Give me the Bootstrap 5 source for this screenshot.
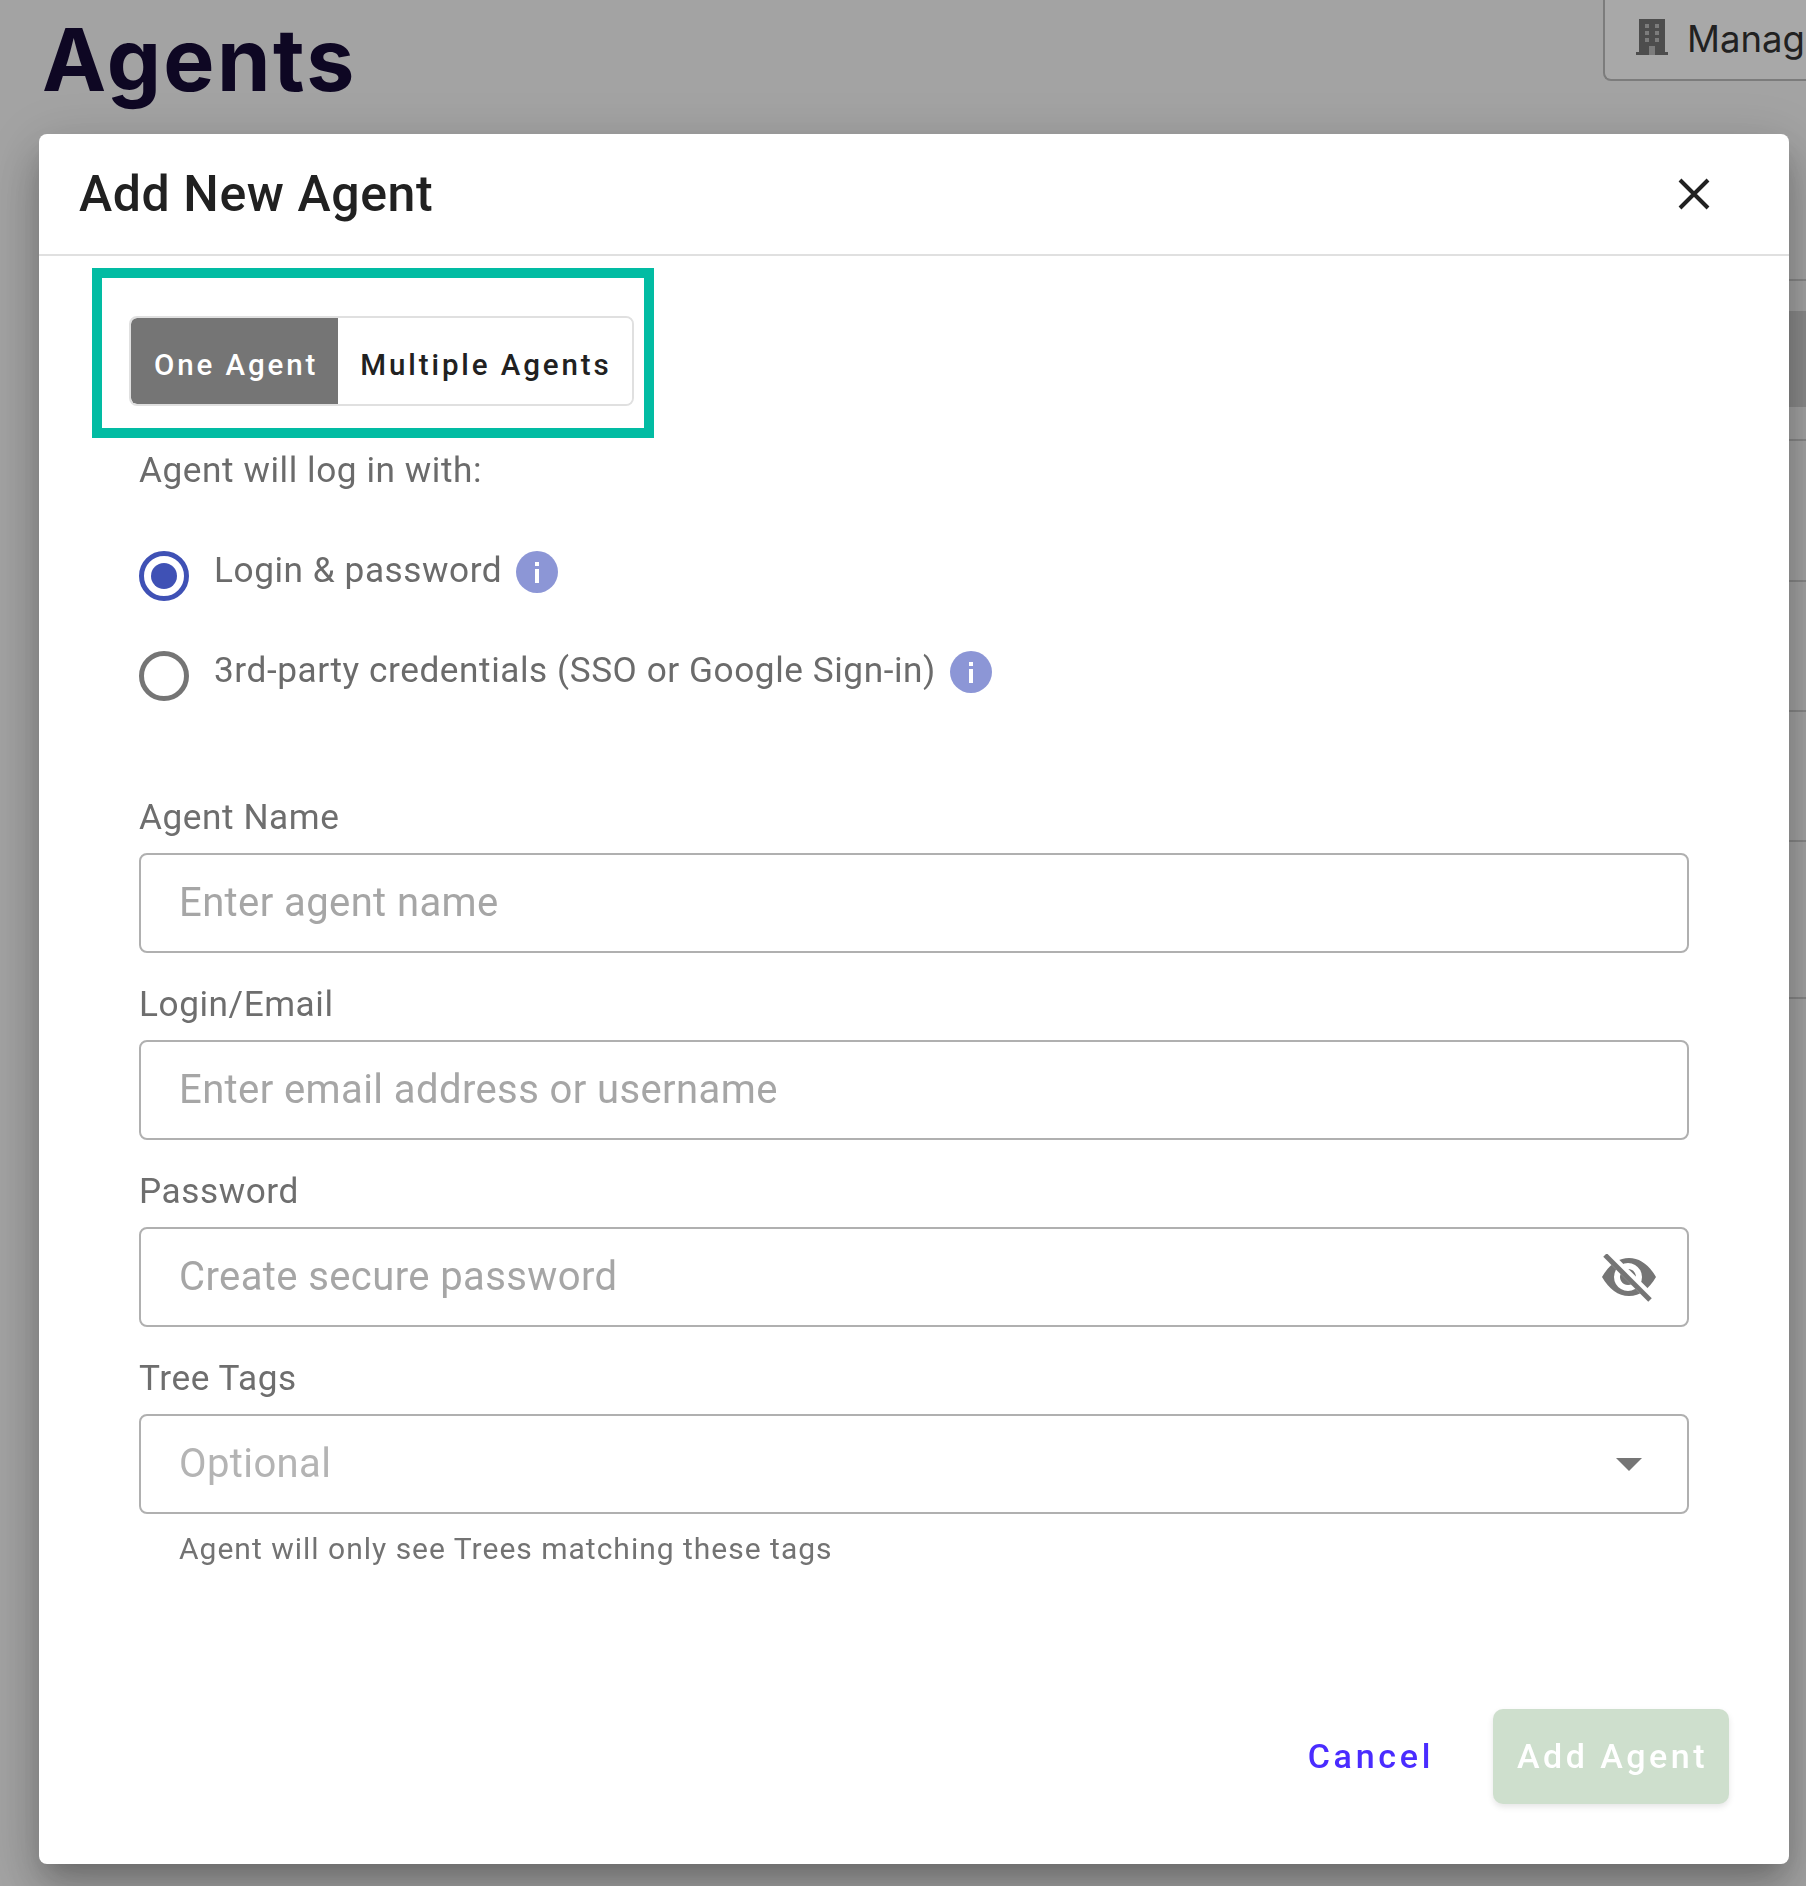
<!DOCTYPE html>
<html lang="en"><head><meta charset="utf-8"><title>Agents</title>
<link href="https://cdn.jsdelivr.net/npm/bootstrap@5.3.0/dist/css/bootstrap.min.css" rel="stylesheet">
<style>
html,body{height:1886px;overflow:hidden;background:#f7f7f7}
body{font-family:Roboto,"Liberation Sans",sans-serif}
.page-under{height:1886px;display:flex;flex-direction:column}
.under-head{height:279px;flex:none;display:flex;justify-content:space-between;align-items:flex-start;padding-left:42px}
.page-title{font-family:Inter,Roboto,sans-serif;font-weight:700;font-size:86px;letter-spacing:2.4px;line-height:1;color:#160b36;margin:17px 0 0}
.manage-box{width:203px;flex:none;height:81px;border:2px solid #bcbcbc;border-top:0;border-right:0;border-radius:0 0 0 8px;background:#fff;display:flex;align-items:center;gap:19px;padding:0 0 6px 31px;font-family:Inter,sans-serif;font-size:36.5px;color:#333;overflow:hidden;white-space:nowrap}
.manage-box svg{flex:none}
.manage-word{margin-top:5px}
.under-rows{width:50%;margin-left:auto;display:flex;flex-direction:column}
.under-line{height:2px;background:#cdcdcd;flex:none}
.under-gap-a{height:30px;flex:none}
.under-band{height:96px;background:#d2d2d2;flex:none}
.under-gap-b{height:32px;flex:none}
.under-row-a{height:139px;flex:none}
.under-row-b{height:128px;flex:none}
.under-row-c{height:155px;flex:none}
.backdrop-layer{position:fixed;inset:0;background:rgba(0,0,0,.34);z-index:1040}
.agent-modal{z-index:1050;overflow:hidden}
.agent-dialog{position:absolute;left:39px;top:134px;width:1750px;max-width:none;margin:0}
.agent-content{height:1730px;border:0;border-radius:8px;box-shadow:0 14px 24px -8px rgba(0,0,0,.2),0 30px 48px 4px rgba(0,0,0,.14),0 12px 58px 10px rgba(0,0,0,.12)}
.agent-header{height:122px;padding:0 40px;border-bottom:2px solid #e0e0e0}
.agent-title{font-size:50px;font-weight:500;line-height:1;color:#212121;letter-spacing:.6px;margin:0}
.x-btn{background:none;border:0;padding:0;width:32px;height:32px;margin-right:39px;display:flex}
.agent-body{padding:12px 100px 0;display:flex;flex-direction:column}
.mode-frame{margin-left:-47px;width:562px;height:170px;border:10px solid #02bca3;display:flex;align-items:center;padding-left:27px;padding-top:16px}
.mode-group{display:flex;height:90px;border:2px solid #e0e0e0;border-radius:8px;overflow:hidden}
.mode-btn{border:0;background:#fff;color:#212121;font-size:29.5px;font-weight:500;letter-spacing:2.9px;padding:9px 20px 0 22px}
.mode-btn.is-on{background:#757575;color:#fff;border-radius:6px 0 0 6px;padding-left:23px;padding-right:20px}
.soft-text{color:#6b6b6b;font-size:35.2px;letter-spacing:.56px;line-height:1.2}
.intro-line{margin-top:11px;height:44px}
.radio-row{display:flex;align-items:flex-start;gap:25px}
.radio-row.first{margin-top:55px}
.radio-row.second{margin-top:47px}
.radio-dot{width:50px;height:50px;border-radius:50%;border:5px solid #757575;flex:none;margin-top:3px;display:flex;align-items:center;justify-content:center}
.radio-dot.is-on{border-color:#3f51b5}
.radio-dot.is-on::after{content:"";width:26px;height:26px;border-radius:50%;background:#3f51b5}
.info-dot{width:42px;height:42px;flex:none;margin:3px 0 0 14px}
.radio-label{line-height:44px;height:44px;white-space:nowrap;display:flex;align-items:flex-start}
.field-wrap.first-field{margin-top:94px}
.field-wrap + .field-wrap{margin-top:29px}
.field-label{display:block;color:#6e6e6e;font-size:35.2px;letter-spacing:.56px;line-height:44px;margin:0 0 14px}
.field-box{height:100px;border:2px solid #b0b0b0;border-radius:8px;display:flex;align-items:center;padding:0 30px 0 38px}
.field-box input{flex:1;border:0;outline:0;padding:0;font-size:40px;letter-spacing:.4px;color:#212121;background:transparent;font-family:inherit;min-width:0}
.field-box input::placeholder{color:#a6a6a6;opacity:1}
.field-box input.faint-hint::placeholder{color:#b4b4b4}
.field-box svg{flex:none;margin-top:1px}
.helper-text{color:#737373;font-size:30px;letter-spacing:1px;line-height:36px;margin:17px 0 0 40px}
.agent-footer{position:absolute;right:60px;bottom:60px;display:flex;align-items:center;gap:0;border:0;padding:0}
.cancel-btn{background:none;border:0;color:#4a2cff;font-size:34px;font-weight:500;letter-spacing:3.7px;padding:0;margin:0 59px 0 0}
.add-btn{background:#cedfcd;color:#fff;border:0;border-radius:10px;width:236px;height:95px;font-size:34px;font-weight:500;letter-spacing:3.5px;padding:0 0 0 3px;margin:0;box-shadow:0 3px 6px rgba(0,0,0,.1)}
</style></head><body>
<div class="page-under">
  <div class="under-head">
    <h1 class="page-title">Agents</h1>
    <div class="manage-box">
      <svg width="32" height="36" viewBox="0 0 32 36" aria-hidden="true"><path fill="#757575" d="M3 0h26v33h3v3H0v-3h3z"/><path fill="#bdbdbd" d="M9 5v4h4V5zm10 0v4h4V5zM9 12v4h4v-4zm10 0v4h4v-4zM9 19v4h4v-4zm10 0v4h4v-4zM13 27v9h6v-9z"/></svg>
      <span class="manage-word">Manag</span>
    </div>
  </div>
  <div class="under-rows">
    <div class="under-line"></div>
    <div class="under-gap-a"></div>
    <div class="under-band"></div>
    <div class="under-gap-b"></div>
    <div class="under-line"></div>
    <div class="under-row-a"></div>
    <div class="under-line"></div>
    <div class="under-row-b"></div>
    <div class="under-line"></div>
    <div class="under-row-b"></div>
    <div class="under-line"></div>
    <div class="under-row-c"></div>
    <div class="under-line"></div>
  </div>
</div>
<div class="backdrop-layer"></div>
<div class="modal d-block agent-modal" tabindex="-1">
  <div class="modal-dialog agent-dialog">
    <div class="modal-content agent-content">
      <div class="modal-header agent-header">
        <h5 class="modal-title agent-title">Add New Agent</h5>
        <button type="button" class="x-btn ms-auto" aria-label="Close"><svg width="32" height="32" viewBox="0 0 32 32"><path d="M2 2 30 30M30 2 2 30" stroke="#212121" stroke-width="4" fill="none"/></svg></button>
      </div>
      <div class="modal-body agent-body">
        <div class="mode-frame">
          <div class="mode-group" role="group">
            <button type="button" class="mode-btn is-on">One Agent</button>
            <button type="button" class="mode-btn">Multiple Agents</button>
          </div>
        </div>
        <div class="soft-text intro-line">Agent will log in with:</div>
        <div class="radio-row first">
          <span class="radio-dot is-on"></span>
          <div class="soft-text radio-label">Login &amp; password<svg class="info-dot" viewBox="0 0 42 42"><circle cx="21" cy="21" r="21" fill="#8c96d6"/><rect x="19" y="18" width="4" height="14" fill="#fff"/><rect x="19" y="11" width="4" height="4" fill="#fff"/></svg></div>
        </div>
        <div class="radio-row second">
          <span class="radio-dot"></span>
          <div class="soft-text radio-label">3rd-party credentials (SSO or Google Sign-in)<svg class="info-dot" viewBox="0 0 42 42"><circle cx="21" cy="21" r="21" fill="#8c96d6"/><rect x="19" y="18" width="4" height="14" fill="#fff"/><rect x="19" y="11" width="4" height="4" fill="#fff"/></svg></div>
        </div>
        <div class="field-wrap first-field">
          <label class="field-label">Agent Name</label>
          <div class="field-box"><input type="text" placeholder="Enter agent name"></div>
        </div>
        <div class="field-wrap">
          <label class="field-label">Login/Email</label>
          <div class="field-box"><input type="text" placeholder="Enter email address or username"></div>
        </div>
        <div class="field-wrap">
          <label class="field-label">Password</label>
          <div class="field-box"><input type="text" placeholder="Create secure password">
            <svg width="56" height="48" viewBox="0 0 56 48"><path fill="#757575" fill-rule="evenodd" d="M1 23C8 11 17 4 28 4S48 11 55 23C48 35 39 42 28 42S8 35 1 23zM27 9a14 14 0 1 0 .01 0zM27 15a8 8 0 1 1-.01 0z"/><path d="M7 1 52 46" stroke="#fff" stroke-width="9"/><path d="M4 1 49 46" stroke="#757575" stroke-width="5"/></svg>
          </div>
        </div>
        <div class="field-wrap">
          <label class="field-label">Tree Tags</label>
          <div class="field-box"><input class="faint-hint" type="text" placeholder="Optional">
            <svg width="56" height="14" viewBox="0 0 56 14"><path fill="#757575" d="M15 0h26L28 13z"/></svg>
          </div>
        </div>
        <p class="helper-text">Agent will only see Trees matching these tags</p>
      </div>
      <div class="modal-footer agent-footer">
        <button type="button" class="cancel-btn">Cancel</button>
        <button type="button" class="add-btn">Add Agent</button>
      </div>
    </div>
  </div>
</div>
</body></html>
